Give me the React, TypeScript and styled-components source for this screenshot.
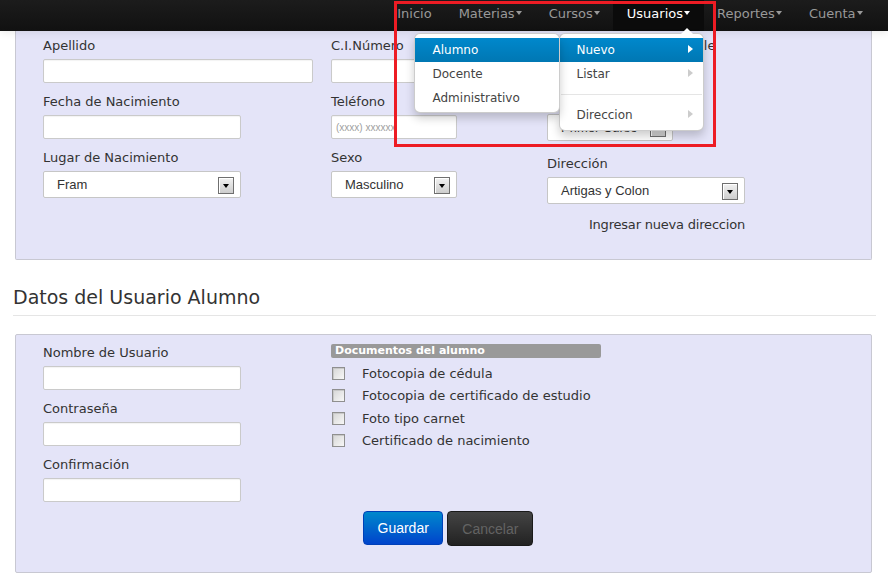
import React from "react";
import styled, { createGlobalStyle, css } from "styled-components";

const GlobalStyle = createGlobalStyle`
  html, body { margin: 0; padding: 0; background: #fff; }
  body {
    font-family: "DejaVu Sans", Verdana, sans-serif;
    font-size: 13px;
    color: #333;
  }
  * { box-sizing: border-box; }
`;

const Page = styled.div`
  position: relative;
  width: 888px;
  min-height: 587px;
  overflow: hidden;
`;

/* ---------- Navbar ---------- */
const Navbar = styled.div`
  position: relative;
  z-index: 10;
  height: 31px;
  background: linear-gradient(#1c1c1c, #111111);
  box-shadow: 0 1px 10px rgba(0, 0, 0, 0.1);
  display: flex;
  justify-content: flex-end;
  padding: 0 12px 0 13px;
`;

const NavList = styled.ul`
  display: flex;
  margin: 0;
  padding: 0;
  list-style: none;
`;

const NavItem = styled.li`
  position: relative;
`;

const NavLink = styled.a<{ $active?: boolean }>`
  display: flex;
  align-items: center;
  height: 31px;
  padding: 0 13.5px 4px;
  font-size: 13px;
  color: #999;
  text-decoration: none;
  white-space: nowrap;
  ${(p) =>
    p.$active &&
    css`
      color: #fff;
      background: #0b0b0b;
    `}
`;

const Caret = styled.span`
  display: inline-block;
  width: 0;
  height: 0;
  margin-left: 1px;
  margin-top: -2px;
  border-top: 4px solid;
  border-left: 3px solid transparent;
  border-right: 3px solid transparent;
`;

/* ---------- Dropdown ---------- */
const Menu = styled.div<{ $sub?: boolean }>`
  position: absolute;
  width: ${(p) => (p.$sub ? 146 : 145)}px;
  background: #fff;
  border: 1px solid rgba(0, 0, 0, 0.2);
  border-radius: 6px;
  box-shadow: 0 5px 10px rgba(0, 0, 0, 0.2);
  padding: ${(p) => (p.$sub ? "4px 0 2px" : "4px 0 3px")};
  ${(p) =>
    p.$sub
      ? css`
          top: -1px;
          right: 100%;
        `
      : css`
          top: calc(100% + 2px);
          right: 0;
          &::after {
            content: "";
            position: absolute;
            top: -6px;
            right: 10px;
            border-left: 6px solid transparent;
            border-right: 6px solid transparent;
            border-bottom: 6px solid #fff;
          }
        `}
`;

const MenuItem = styled.div<{ $active?: boolean; $inset?: number }>`
  display: flex;
  align-items: center;
  justify-content: space-between;
  height: 24px;
  padding: 0 10px 0 ${(p) => p.$inset ?? 18}px;
  font-size: 12px;
  color: #444;
  white-space: nowrap;
  ${(p) =>
    p.$active &&
    css`
      color: #fff;
      background: linear-gradient(#0088cc, #0077b3);
    `}
`;

const SubCaret = styled.span<{ $light?: boolean }>`
  width: 0;
  height: 0;
  border-left: 5px solid ${(p) => (p.$light ? "#fff" : "#ccc")};
  border-top: 4px solid transparent;
  border-bottom: 4px solid transparent;
  margin-top: -2px;
`;

const Divider = styled.div`
  height: 1px;
  margin: 8px 1px;
  background: #e5e5e5;
`;

const Annotation = styled.div`
  position: absolute;
  left: 394px;
  top: 1px;
  width: 322px;
  height: 146px;
  border: 3px solid #ed1c24;
  z-index: 20;
  pointer-events: none;
`;

/* ---------- Content ---------- */
const Container = styled.div`
  padding: 0 12px 0 13px;
`;

const Panel = styled.div<{ $cutTop?: boolean }>`
  margin: 0 4px 0 2px;
  background: #e4e4f8;
  border: 1px solid #c8c8d2;
  border-radius: 2px;
  padding: ${(p) => (p.$cutTop ? "6px 20px 25px 27px" : "9px 20px 26px 27px")};
  ${(p) =>
    p.$cutTop &&
    css`
      border-top: none;
      border-radius: 0 0 2px 2px;
    `}
`;

const FormGrid = styled.div`
  display: grid;
  grid-template-columns: 288px 216px 1fr;
  align-items: start;
`;

const Column = styled.div`
  display: flex;
  flex-direction: column;
`;

const Field = styled.div<{ $after?: number; $labelGap?: number }>`
  display: flex;
  flex-direction: column;
  margin-bottom: ${(p) => p.$after ?? 10}px;
  & > label {
    margin-bottom: ${(p) => p.$labelGap ?? 4}px;
  }
`;

const Label = styled.label`
  display: block;
  line-height: 18px;
  font-size: 13px;
  color: #333;
  white-space: nowrap;
`;

const TextInput = styled.input<{ $w: number }>`
  width: ${(p) => p.$w}px;
  height: 24px;
  margin: 0;
  padding: 2px 4px;
  background: #fff;
  border: 1px solid #cacaca;
  border-radius: 2px;
  box-shadow: inset 0 1px 1px rgba(0, 0, 0, 0.05);
  font-family: "Liberation Sans", Arial, sans-serif;
  font-size: 10px;
  color: #333;
  outline: none;
  &::placeholder {
    color: #a0a0a0;
  }
`;

const Select = styled.div<{ $w: number }>`
  display: flex;
  align-items: center;
  justify-content: space-between;
  width: ${(p) => p.$w}px;
  height: 27px;
  padding: 0 6px 0 13px;
  background: #fff;
  border: 1px solid #c6c6c6;
  border-radius: 2px;
  font-family: "Liberation Sans", Arial, sans-serif;
  font-size: 13px;
  color: #333;
`;

const SelectArrow = styled.span`
  display: flex;
  align-items: center;
  justify-content: center;
  flex-shrink: 0;
  width: 16px;
  height: 17px;
  margin-top: 2px;
  border: 1px solid #6f6f6f;
  box-shadow: inset 1px 1px 0 #fff;
  background: linear-gradient(#f2f2f2, #cdcdcd);
  &::after {
    content: "";
    border-top: 4px solid #000;
    border-left: 3.5px solid transparent;
    border-right: 3.5px solid transparent;
  }
`;

const LinkText = styled.a`
  align-self: flex-start;
  width: 198px;
  margin-top: 12px;
  line-height: 18px;
  text-align: right;
  letter-spacing: -0.2px;
  color: #333;
  text-decoration: none;
  white-space: nowrap;
`;

const SectionTitle = styled.h3`
  margin: 20px 0 18px;
  line-height: 35px;
  font-size: 19px;
  font-weight: normal;
  color: #333;
  border-bottom: 1px solid #e5e5e5;
`;

const DocsHeader = styled.div`
  width: 270px;
  height: 14px;
  margin-bottom: 4px;
  padding-left: 4px;
  background: #999;
  border-radius: 2px;
  color: #fff;
  font-size: 11px;
  font-weight: bold;
  line-height: 14px;
`;

const CheckRow = styled.label`
  display: flex;
  align-items: center;
  height: 22.5px;
  font-size: 13px;
  color: #333;
  white-space: nowrap;
`;

const CheckBox = styled.span`
  flex-shrink: 0;
  width: 13px;
  height: 13px;
  margin: 0 17px 0 1px;
  border: 1px solid #8f8f8f;
  background: linear-gradient(135deg, #d6d6d6, #f7f7f7);
  box-shadow: inset 1px 1px 0 #c8c8c8;
`;

const Actions = styled.div`
  display: flex;
  gap: 4px;
  margin-top: 9px;
  padding-left: 320px;
`;

const Button = styled.button<{ $variant: "primary" | "inverse" }>`
  height: 35px;
  padding: 0 13.5px;
  border-radius: 4px;
  font-family: "Liberation Sans", Arial, sans-serif;
  font-size: 14px;
  cursor: pointer;
  ${(p) =>
    p.$variant === "primary"
      ? css`
          color: #fff;
          background: linear-gradient(#0088cc, #0044cc);
          border: 1px solid #0040b8;
          height: 34px;
        `
      : css`
          padding: 0 14px;
          color: #636363;
          background: linear-gradient(#444, #222);
          border: 1px solid #1a1a1a;
        `}
`;

const navItems = ["Inicio", "Materias", "Cursos", "Usuarios", "Reportes", "Cuenta"];
const docs = [
  "Fotocopia de cédula",
  "Fotocopia de certificado de estudio",
  "Foto tipo carnet",
  "Certificado de nacimiento",
];

export default function App() {
  return (
    <Page>
      <GlobalStyle />
      <Navbar>
        <NavList>
          {navItems.map((name, i) => (
            <NavItem key={name}>
              <NavLink $active={name === "Usuarios"}>
                {name}
                {i > 0 && <Caret />}
              </NavLink>
              {name === "Usuarios" && (
                <Menu>
                  <MenuItem $active $inset={17}>
                    Nuevo
                    <SubCaret $light />
                    <Menu $sub>
                      <MenuItem $active>Alumno</MenuItem>
                      <MenuItem>Docente</MenuItem>
                      <MenuItem>Administrativo</MenuItem>
                    </Menu>
                  </MenuItem>
                  <MenuItem $inset={17}>
                    Listar
                    <SubCaret />
                  </MenuItem>
                  <Divider />
                  <MenuItem $inset={17}>
                    Direccion
                    <SubCaret />
                  </MenuItem>
                </Menu>
              )}
            </NavItem>
          ))}
        </NavList>
      </Navbar>

      <Container>
        <Panel $cutTop>
          <FormGrid>
            <Column>
              <Field>
                <Label>Apellido</Label>
                <TextInput $w={270} />
              </Field>
              <Field>
                <Label>Fecha de Nacimiento</Label>
                <TextInput $w={198} />
              </Field>
              <Field $after={0}>
                <Label>Lugar de Nacimiento</Label>
                <Select $w={198}>
                  Fram
                  <SelectArrow />
                </Select>
              </Field>
            </Column>
            <Column>
              <Field>
                <Label>C.I.Número</Label>
                <TextInput $w={198} />
              </Field>
              <Field>
                <Label>Teléfono</Label>
                <TextInput $w={126} placeholder="(xxxx) xxxxxx" />
              </Field>
              <Field $after={0}>
                <Label>Sexo</Label>
                <Select $w={126}>
                  Masculino
                  <SelectArrow />
                </Select>
              </Field>
            </Column>
            <Column>
              <Field>
                <Label>Grados y curso disponible</Label>
                <TextInput $w={126} />
              </Field>
              <Field $after={14} $labelGap={3}>
                <Label>Curso</Label>
                <Select $w={126}>
                  Primer Curso
                  <SelectArrow />
                </Select>
              </Field>
              <Field $after={0}>
                <Label>Dirección</Label>
                <Select $w={198}>
                  Artigas y Colon
                  <SelectArrow />
                </Select>
              </Field>
              <LinkText>Ingresar nueva direccion</LinkText>
            </Column>
          </FormGrid>
        </Panel>

        <SectionTitle>Datos del Usuario Alumno</SectionTitle>

        <Panel>
          <FormGrid>
            <Column>
              <Field>
                <Label>Nombre de Usuario</Label>
                <TextInput $w={198} />
              </Field>
              <Field>
                <Label>Contraseña</Label>
                <TextInput $w={198} type="password" />
              </Field>
              <Field $after={0}>
                <Label>Confirmación</Label>
                <TextInput $w={198} type="password" />
              </Field>
            </Column>
            <Column>
              <DocsHeader>Documentos del alumno</DocsHeader>
              {docs.map((d) => (
                <CheckRow key={d}>
                  <CheckBox />
                  {d}
                </CheckRow>
              ))}
            </Column>
          </FormGrid>
          <Actions>
            <Button $variant="primary">Guardar</Button>
            <Button $variant="inverse">Cancelar</Button>
          </Actions>
        </Panel>
      </Container>

      <Annotation />
    </Page>
  );
}
